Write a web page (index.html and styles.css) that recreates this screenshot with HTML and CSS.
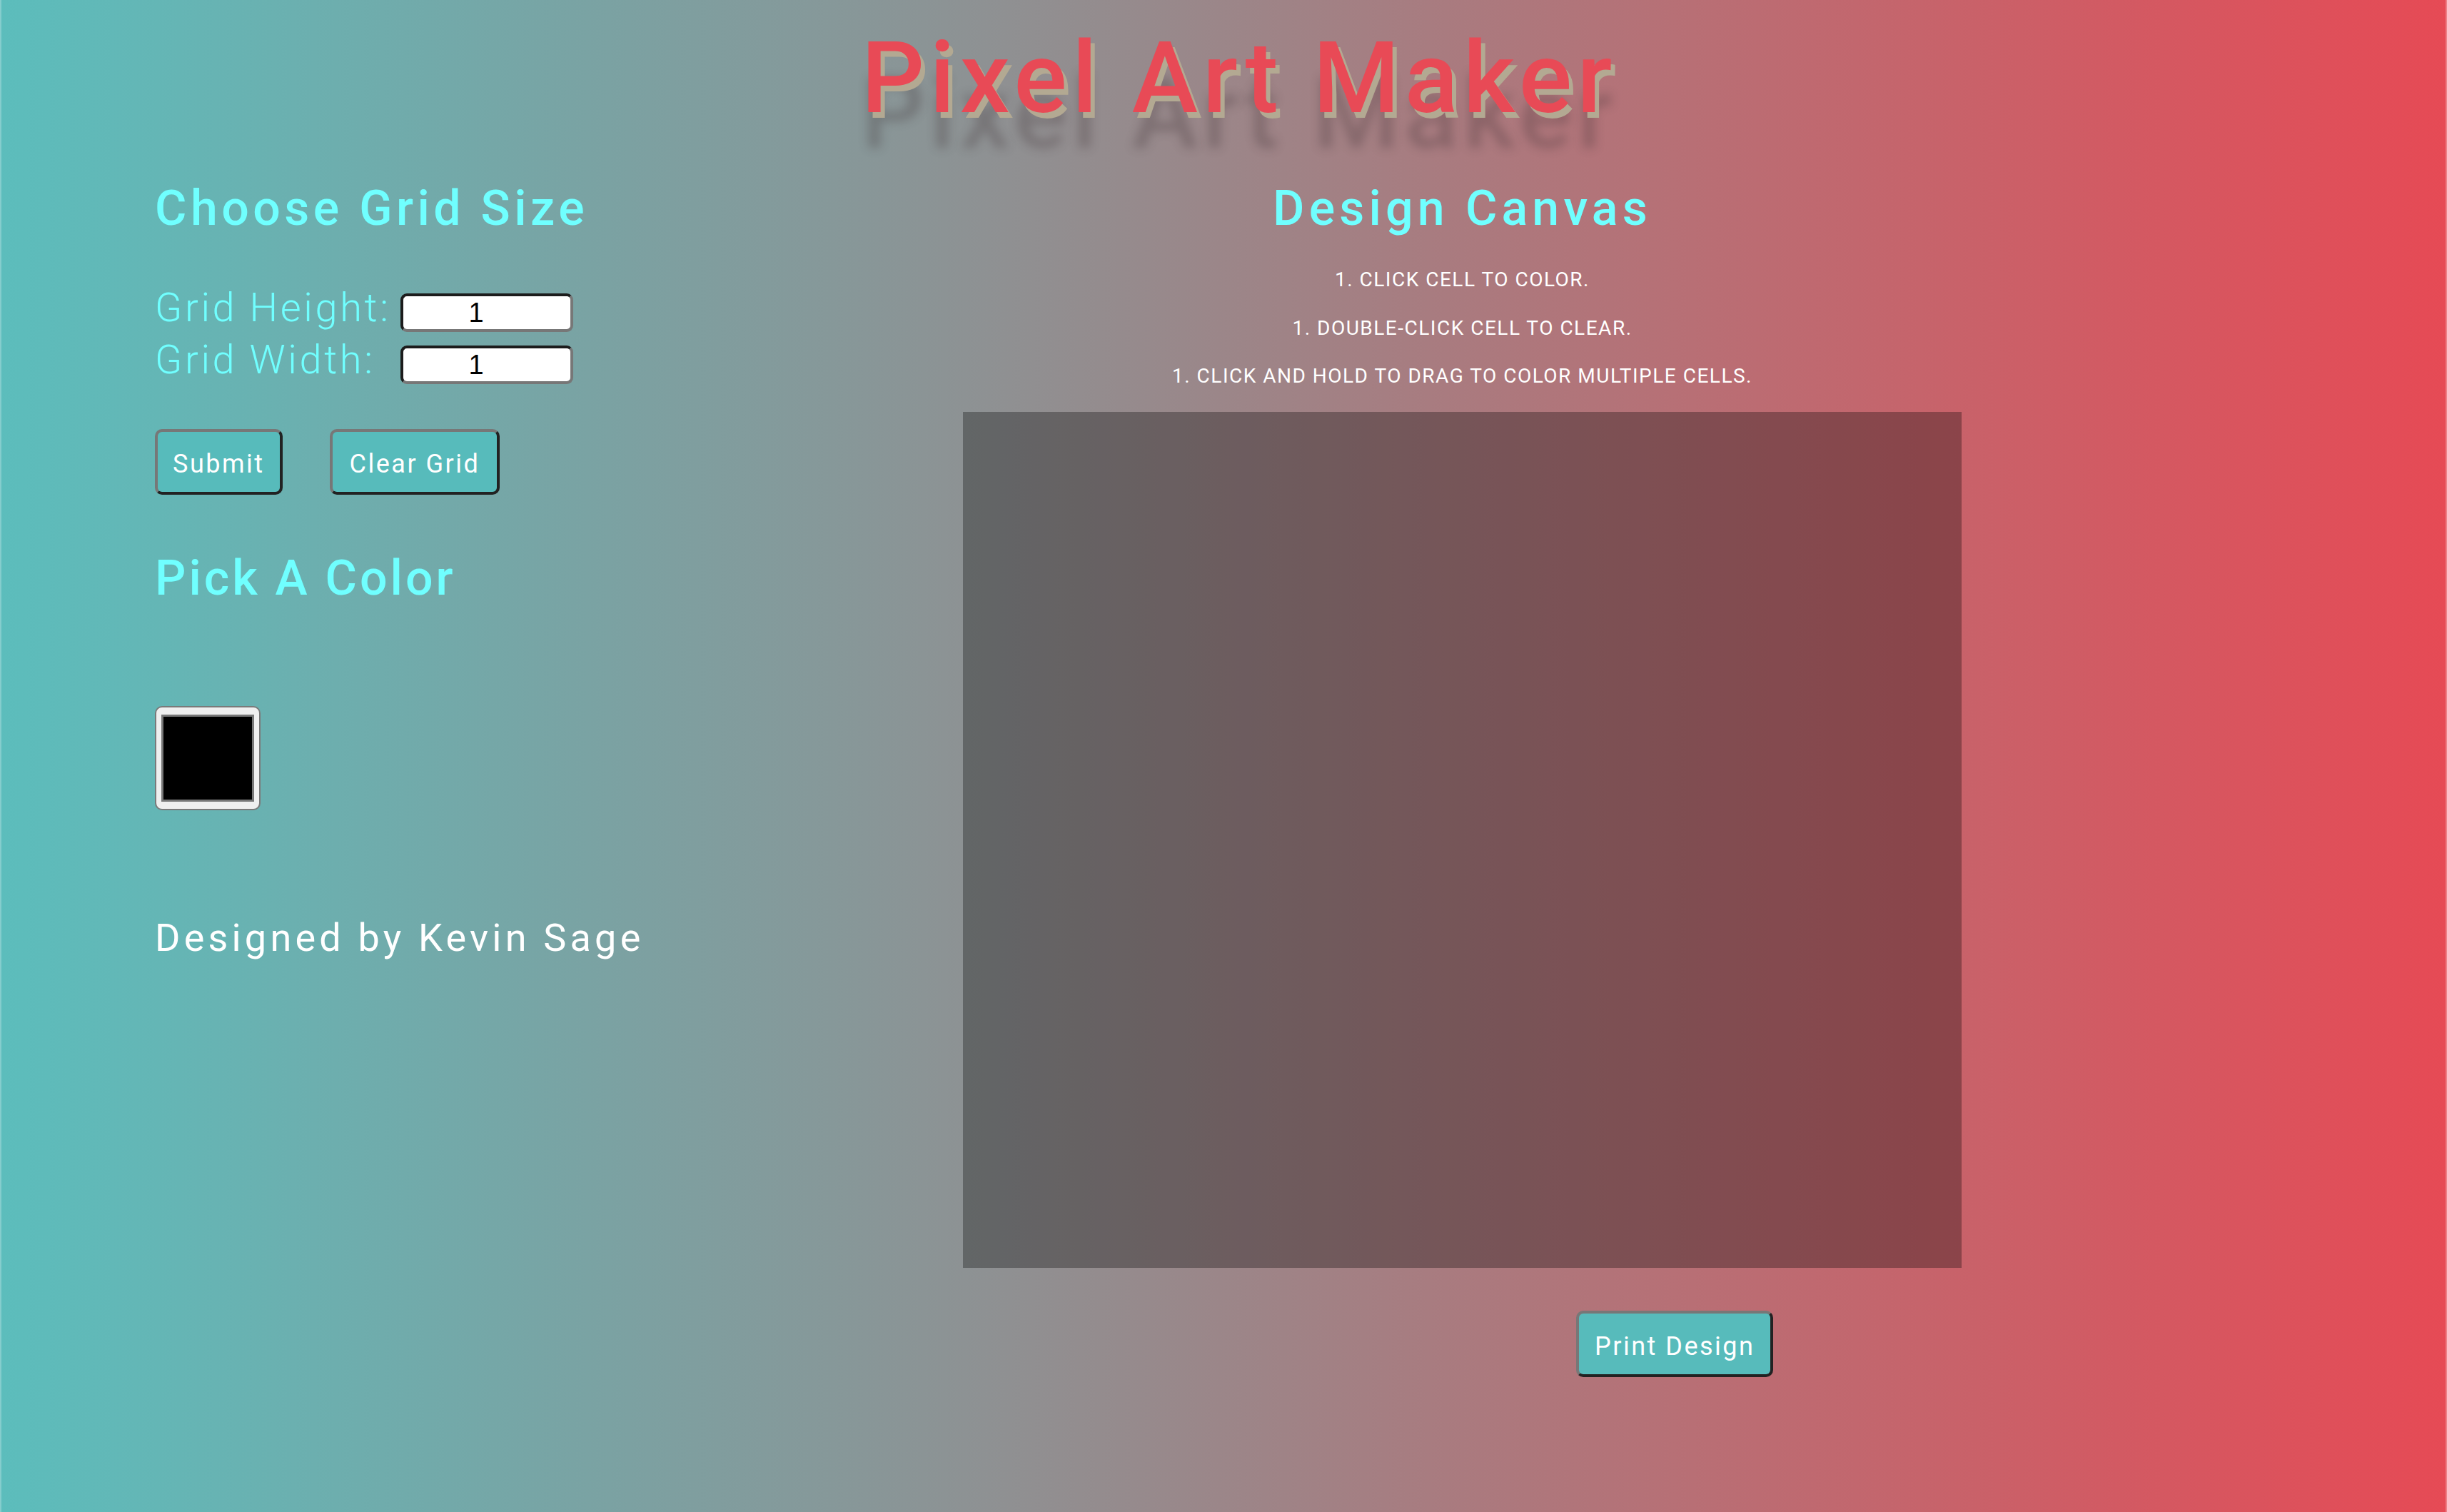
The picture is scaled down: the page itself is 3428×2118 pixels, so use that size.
FILE: index.html
```html
<!DOCTYPE html>
<html lang="en">
<head>
<meta charset="utf-8">
<title>Pixel Art Maker</title>
<link rel="stylesheet" href="styles.css">
</head>
<body>
<header class="title-bar">
  <h1 class="title">Pixel Art Maker</h1>
</header>
<main class="layout">
  <section class="controls">
    <h2 class="heading">Choose Grid Size</h2>
    <form class="size-form">
      <div class="field">
        <label class="field-label" for="h">Grid Height:</label>
        <input class="num" id="h" type="text" value="1">
      </div>
      <div class="field">
        <label class="field-label" for="w">Grid Width:</label>
        <input class="num" id="w" type="text" value="1">
      </div>
      <div class="actions">
        <button class="btn" type="button">Submit</button>
        <button class="btn btn-wide" type="button">Clear Grid</button>
      </div>
    </form>
    <h2 class="heading pick">Pick A Color</h2>
    <div class="swatch"><div class="swatch-fill"></div></div>
    <p class="credit">Designed by Kevin Sage</p>
  </section>
  <section class="canvas-col">
    <h2 class="heading heading-canvas">Design Canvas</h2>
    <ol class="steps">
      <li>1. Click cell to color.</li>
      <li>1. Double-click cell to clear.</li>
      <li>1. Click and hold to drag to color multiple cells.</li>
    </ol>
    <div class="canvas"></div>
    <button class="btn print" type="button">Print Design</button>
  </section>
</main>
</body>
</html>
```
FILE: styles.css
```css
html, body {
  margin: 0;
  padding: 0;
}
body {
  min-height: 2118px;
  background: linear-gradient(to right, #5cbdbc 0%, #948c8e 45%, #e64a55 100%);
  font-family: Roboto, "Noto Sans", sans-serif;
  box-shadow: inset 2px 0 0 rgba(255,255,255,0.25), inset -2px 0 0 rgba(255,255,255,0.3);
  overflow: hidden;
}
.title-bar {
  padding-top: 40px;
  padding-left: 44px;
  text-align: center;
}
.title {
  margin: 0;
  font-size: 139px;
  line-height: 139px;
  font-weight: 500;
  letter-spacing: 7px;
  color: #e84a56;
  text-shadow: 6px 8px 0 #b3a992, 0 50px 14px rgba(60, 45, 50, 0.28);
}
.layout {
  display: flex;
  padding-top: 79px;
  padding-left: 217px;
}
.controls {
  width: 1132px;
  flex: none;
}
.canvas-col {
  width: 1399px;
  flex: none;
  text-align: center;
}
.heading {
  margin: 0;
  font-size: 68px;
  line-height: 68px;
  font-weight: 500;
  letter-spacing: 5.5px;
  color: #70ffff;
}
.heading-canvas {
  letter-spacing: 6.2px;
}
.size-form {
  margin-top: 77px;
}
.field {
  display: flex;
  align-items: flex-start;
}
.field + .field {
  margin-top: 11px;
}
.field-label {
  width: 344px;
  font-size: 56px;
  line-height: 56px;
  font-weight: 300;
  letter-spacing: 3.6px;
  color: #70ffff;
}
.num {
  margin-top: 8px;
  width: 242px;
  height: 54px;
  box-sizing: border-box;
  padding: 0 30px 0 0;
  border: 4px solid;
  border-color: #1c1c1c #777 #777 #1c1c1c;
  border-radius: 9px;
  background: #fff;
  font-family: "Liberation Sans", Arial, sans-serif;
  font-size: 38px;
  text-align: center;
  color: #000;
}
.actions {
  display: flex;
  gap: 66px;
  margin-top: 63px;
}
.btn {
  height: 92px;
  box-sizing: border-box;
  padding: 6px 21px 0;
  border: 4px solid;
  border-color: #777 #222 #222 #777;
  border-radius: 10px;
  background: #57bbbb;
  color: #fff;
  font-family: Roboto, "Noto Sans", sans-serif;
  font-size: 36px;
  line-height: 36px;
  font-weight: 400;
  letter-spacing: 2.5px;
}
.btn-wide {
  padding: 6px 24px 0;
}
.pick {
  margin-top: 83px;
  letter-spacing: 4px;
}
.swatch {
  margin-top: 145px;
  width: 148px;
  height: 146px;
  box-sizing: border-box;
  padding: 10px 7px;
  border: 2px solid #7a7a7a;
  border-radius: 10px;
  background: #efefef;
}
.swatch-fill {
  width: 100%;
  height: 100%;
  box-sizing: border-box;
  border: 3px solid #777;
  background: #000;
}
.credit {
  margin: 152px 0 0;
  font-size: 54px;
  line-height: 54px;
  font-weight: 400;
  letter-spacing: 5.2px;
  color: #fff;
}
.steps {
  list-style: none;
  margin: 52px 0 0;
  padding: 0;
}
.steps li {
  font-size: 28px;
  line-height: 28px;
  font-weight: 400;
  letter-spacing: 1.5px;
  text-transform: uppercase;
  color: #fff;
  margin-bottom: 39.5px;
}
.steps li:last-child {
  margin-bottom: 0;
}
.canvas {
  margin-top: 36px;
  height: 1199px;
  background: rgba(0, 0, 0, 0.3);
}
.print {
  display: block;
  margin: 60px 0 0 859px;
  height: 93px;
  padding: 6px 22px 0;
}
```
